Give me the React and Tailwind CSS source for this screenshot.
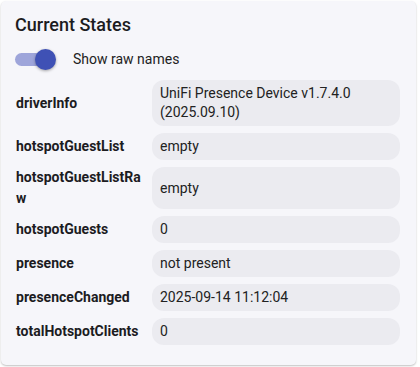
import React from "react";

const rows = [
  ["driverInfo", "UniFi Presence Device v1.7.4.0 (2025.09.10)"],
  ["hotspotGuestList", "empty"],
  ["hotspotGuestListRaw", "empty"],
  ["hotspotGuests", "0"],
  ["presence", "not present"],
  ["presenceChanged", "2025-09-14 11:12:04"],
  ["totalHotspotClients", "0"],
];

export default function App() {
  return (
    <div className="w-[420px] h-[367px] bg-white pt-px pl-px" style={{ fontFamily: "Roboto, 'Liberation Sans', sans-serif" }}>
      <div className="w-[415px] h-[364px] rounded-[5px] bg-[#f6f6fa] shadow-[0_1px_2px_rgba(0,0,0,0.25)] px-[14px] pt-[12px]">
        <h2 className="text-[18px] leading-[24px] font-medium text-[#1c1c1f]">Current States</h2>
        <div className="flex items-center mt-[11px] h-[22px]">
          <div className="relative w-[41px] h-[22px] flex items-center">
            <div className="w-[38px] h-[13px] rounded-full bg-[#9ea5da]" />
            <div className="absolute left-[20px] top-px w-[21px] h-[21px] rounded-full bg-[#3f51b5] shadow-[0_1px_3px_rgba(0,0,0,0.35)]" />
          </div>
          <span className="ml-[17px] text-[14px] text-[#222]">Show raw names</span>
        </div>
        <div className="grid grid-cols-[129px_248px] gap-x-[8px] gap-y-[7px] mt-[10px]">
          {rows.map(([k, v]) => (
            <React.Fragment key={k}>
              <div className="flex items-center text-[14px] leading-[21px] font-bold text-[#1c1c1f] break-all pl-px">{k}</div>
              <div className="rounded-[12px] bg-[#ebebf0] px-[8px] py-[4px] text-[14px] leading-[19px] text-[#222] flex items-center">{v}</div>
            </React.Fragment>
          ))}
        </div>
      </div>
    </div>
  );
}
